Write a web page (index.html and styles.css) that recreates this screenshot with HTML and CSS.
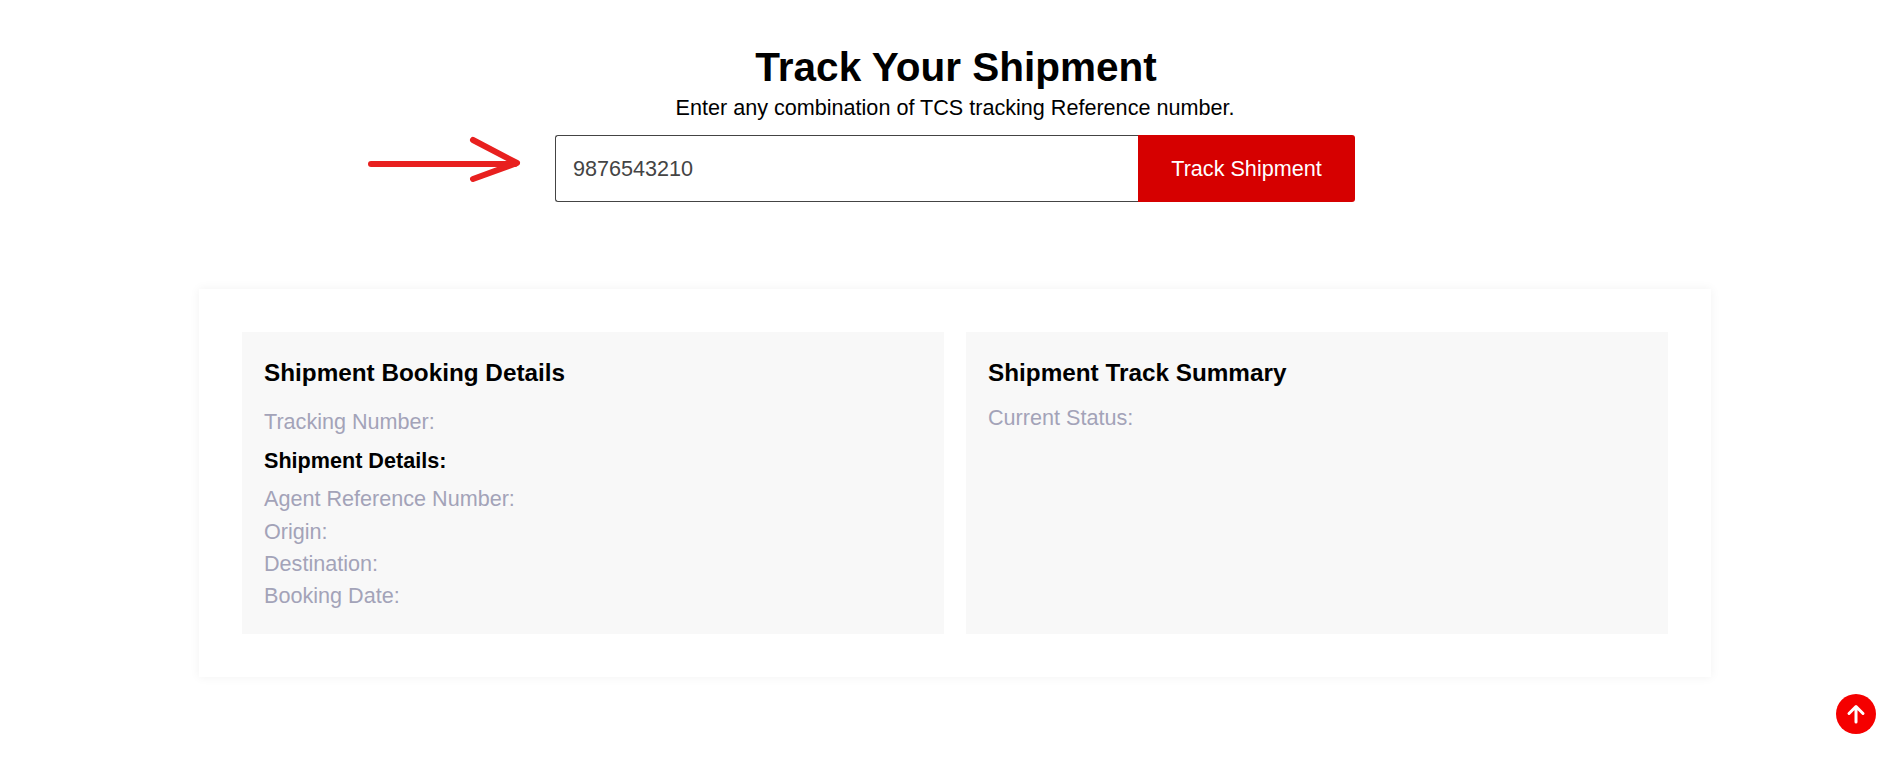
FILE: index.html
```html
<!DOCTYPE html>
<html lang="en">
<head>
    <meta charset="UTF-8">
    <meta name="viewport" content="width=device-width, initial-scale=1.0">
    <title>Track Your Shipment</title>
    <link rel="stylesheet" href="styles.css">
</head>
<body>
    <div class="page">
        <section class="track-head">
            <h1>Track Your Shipment</h1>
            <p>Enter any combination of TCS tracking Reference number.</p>
            <form class="track-form">
                <svg class="hint-arrow" width="160" height="70" viewBox="0 0 160 70" aria-hidden="true">
                    <path d="M4 35 L148 35" />
                    <path d="M106 11 L150 34 L106 50" />
                </svg>
                <input type="text" value="9876543210">
                <button type="button">Track Shipment</button>
            </form>
        </section>

        <section class="result-card">
            <div class="panel">
                <h2>Shipment Booking Details</h2>
                <div class="row row-single">Tracking Number:</div>
                <h3>Shipment Details:</h3>
                <div class="row">Agent Reference Number:</div>
                <div class="row">Origin:</div>
                <div class="row">Destination:</div>
                <div class="row">Booking Date:</div>
            </div>
            <div class="panel">
                <h2>Shipment Track Summary</h2>
                <div class="row">Current Status:</div>
            </div>
        </section>
    </div>

    <a class="to-top" href="#">
        <svg width="24" height="24" viewBox="0 0 24 24" aria-hidden="true">
            <path d="M12 20 V5 M5 11.5 L12 4.5 L19 11.5" />
        </svg>
    </a>
</body>
</html>
```

FILE: styles.css
```css
* {
    box-sizing: border-box;
}
body {
    margin: 0;
    background: #fff;
    color: #000;
    font-family: "Liberation Sans", Arial, sans-serif;
}
.page {
    padding: 44px 0 60px 7px;
}
.track-head {
    text-align: center;
}
.track-head h1 {
    margin: 0;
    padding-left: 2px;
    font-size: 40.5px;
    line-height: 46px;
    font-weight: 700;
}
.track-head p {
    margin: 6px 0 0;
    font-size: 21.6px;
    line-height: 24px;
}
.track-form {
    position: relative;
    display: flex;
    width: 800px;
    height: 67px;
    margin: 15px auto 0;
}
.hint-arrow {
    position: absolute;
    left: -188px;
    top: -6px;
}
.hint-arrow path {
    fill: none;
    stroke: #e8201f;
    stroke-width: 6;
    stroke-linecap: round;
    stroke-linejoin: round;
}
.track-form input {
    flex: 1;
    min-width: 0;
    padding: 0 17px;
    border: 1px solid #444;
    border-right: 0;
    border-radius: 3px 0 0 3px;
    background: #fff;
    color: #444;
    font: 21.6px "Liberation Sans", Arial, sans-serif;
}
.track-form button {
    width: 217px;
    border: 0;
    border-radius: 0 3px 3px 0;
    background: #d60000;
    color: #fff;
    font: 21.6px "Liberation Sans", Arial, sans-serif;
}
.result-card {
    display: grid;
    grid-template-columns: 1fr 1fr;
    gap: 22px;
    width: 1512px;
    margin: 87px auto 0;
    padding: 43px;
    background: #fff;
    box-shadow: 0 0 10px rgba(0,0,0,0.06);
}
.panel {
    height: 302px;
    padding: 26px 22px;
    background: #f8f8f8;
}
.panel h2 {
    margin: 0 0 14px;
    font-size: 24.3px;
    line-height: 30px;
    font-weight: 700;
}
.panel h3 {
    margin: 7px 0 6px;
    font-size: 21.6px;
    line-height: 32px;
    font-weight: 700;
}
.row {
    color: #a3a3b8;
    font-size: 21.6px;
    line-height: 32.25px;
}
.row-single {
    margin-top: 18px;
}
.to-top {
    position: fixed;
    right: 27px;
    bottom: 49px;
    display: flex;
    align-items: center;
    justify-content: center;
    width: 40px;
    height: 40px;
    border-radius: 50%;
    background: #f50000;
}
.to-top path {
    fill: none;
    stroke: #fff;
    stroke-width: 3;
    stroke-linecap: round;
    stroke-linejoin: round;
}
```
